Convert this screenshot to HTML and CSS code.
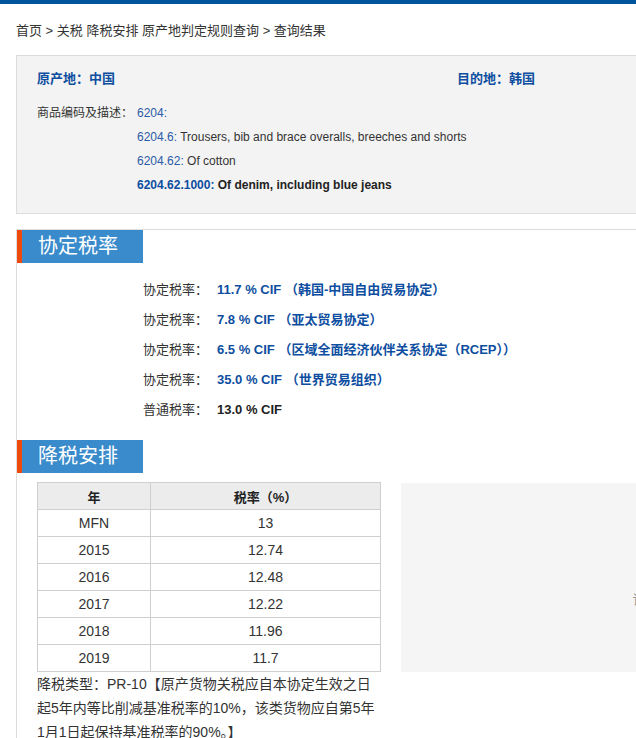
FILE: index.html
```html
<!DOCTYPE html>
<html lang="zh-CN">
  <head>
    <meta charset="UTF-8" />
    <meta name="viewport" content="width=device-width, initial-scale=1.0" />
    <title>查询结果</title>
    <link rel="stylesheet" href="styles.css">
  </head>
  <body>
    <div class="topbar"></div>
    <div class="page">
      <div class="crumbs">首页 &gt; 关税 降税安排 原产地判定规则查询 &gt; 查询结果</div>

      <div class="info-box">
        <div class="route">
          <span class="origin">原产地：中国</span>
          <span class="dest">目的地：韩国</span>
        </div>
        <div class="goods">
          <div class="goods-label">商品编码及描述：</div>
          <ul class="codes">
            <li><span class="code">6204:</span></li>
            <li><span class="code">6204.6:</span> Trousers, bib and brace overalls, breeches and shorts</li>
            <li><span class="code">6204.62:</span> Of cotton</li>
            <li class="current"><span class="code">6204.62.1000:</span> Of denim, including blue jeans</li>
          </ul>
        </div>
      </div>

      <div class="section">
        <h3 class="sec-title">协定税率</h3>
        <ul class="rates">
          <li><span class="rate-label">协定税率：</span><span class="rate-val">11.7 % CIF （韩国-中国自由贸易协定）</span></li>
          <li><span class="rate-label">协定税率：</span><span class="rate-val">7.8 % CIF （亚太贸易协定）</span></li>
          <li><span class="rate-label">协定税率：</span><span class="rate-val">6.5 % CIF （区域全面经济伙伴关系协定（RCEP））</span></li>
          <li><span class="rate-label">协定税率：</span><span class="rate-val">35.0 % CIF （世界贸易组织）</span></li>
          <li><span class="rate-label">普通税率：</span><span class="rate-val plain">13.0 % CIF</span></li>
        </ul>

        <h3 class="sec-title">降税安排</h3>
        <div class="cut-row">
          <div class="cut-left">
            <table class="cut-table">
              <thead>
                <tr><th class="col-year">年</th><th>税率（%）</th></tr>
              </thead>
              <tbody>
                <tr><td>MFN</td><td>13</td></tr>
                <tr><td>2015</td><td>12.74</td></tr>
                <tr><td>2016</td><td>12.48</td></tr>
                <tr><td>2017</td><td>12.22</td></tr>
                <tr><td>2018</td><td>11.96</td></tr>
                <tr><td>2019</td><td>11.7</td></tr>
              </tbody>
            </table>
            <p class="cut-note">降税类型：PR-10【原产货物关税应自本协定生效之日<br>起5年内等比削减基准税率的10%，该类货物应自第5年<br>1月1日起保持基准税率的90%。】</p>
          </div>
          <div class="chart-box">
            <span class="chart-empty">该税目暂无降税图表</span>
          </div>
        </div>
      </div>
    </div>
  </body>
</html>
```

FILE: styles.css
```css
html,
body {
  overflow: hidden;
}
body {
  margin: 0;
  padding: 0;
  font-family: "Liberation Sans", "Noto Sans CJK SC", sans-serif;
  font-size: 13px;
  color: #333;
  background: #fff;
}
.topbar {
  height: 4px;
  background: #00569c;
}
.page {
  width: 1000px;
  padding-left: 16px;
}
.crumbs {
  margin-top: 17px;
  line-height: 20px;
  color: #333;
}
.info-box {
  margin-top: 14px;
  background: #f3f3f3;
  border: 1px solid #dcdcdc;
  padding: 13px 20px 16px;
}
.route {
  display: flex;
  line-height: 20px;
  font-weight: bold;
  color: #0d4ea0;
}
.origin {
  width: 420px;
}
.goods {
  display: flex;
  margin-top: 12px;
  font-size: 12px;
  line-height: 24px;
}
.goods-label {
  width: 100px;
  flex: none;
}
.codes {
  list-style: none;
  margin: 0;
  padding: 0;
}
.code {
  color: #2a5ba7;
}
.codes .current {
  font-weight: bold;
  color: #222;
}
.codes .current .code {
  color: #0d4ea0;
}
.section {
  margin-top: 15px;
  border-top: 1px solid #dcdcdc;
  border-left: 1px solid #dcdcdc;
}
.sec-title {
  display: block;
  width: 105px;
  height: 33px;
  margin: 0;
  padding-left: 16px;
  line-height: 33px;
  font-size: 20px;
  font-weight: normal;
  color: #fff;
  background: #3a8bcb;
  border-left: 5px solid #ee4a0c;
}
.rates {
  list-style: none;
  margin: 12px 0 15px;
  padding: 0 0 0 126px;
}
.rates li {
  line-height: 30px;
}
.rate-label {
  display: inline-block;
  width: 74px;
  color: #333;
}
.rate-val {
  font-weight: bold;
  color: #0d4ea0;
}
.rate-val.plain {
  color: #222;
}
.cut-row {
  display: flex;
  align-items: flex-start;
  margin-top: 9px;
  padding-left: 20px;
}
.cut-left {
  width: 344px;
  flex: none;
}
.cut-table {
  width: 344px;
  border-collapse: collapse;
  font-size: 14px;
}
.cut-table th,
.cut-table td {
  height: 26px;
  padding: 0;
  border: 1px solid #cfcfcf;
  text-align: center;
  color: #333;
}
.cut-table th {
  background: #ececec;
  font-size: 13px;
  font-weight: bold;
  color: #222;
}
.col-year {
  width: 112px;
}
.cut-note {
  margin: 0;
  font-size: 14px;
  line-height: 24px;
  white-space: nowrap;
  color: #333;
}
.chart-box {
  width: 580px;
  height: 189px;
  margin-left: 20px;
  margin-top: 1px;
  background: #f5f5f5;
  display: flex;
  justify-content: center;
  padding-top: 108px;
  box-sizing: border-box;
}
.chart-empty {
  font-size: 13px;
  line-height: 18px;
  color: #999;
}
```
